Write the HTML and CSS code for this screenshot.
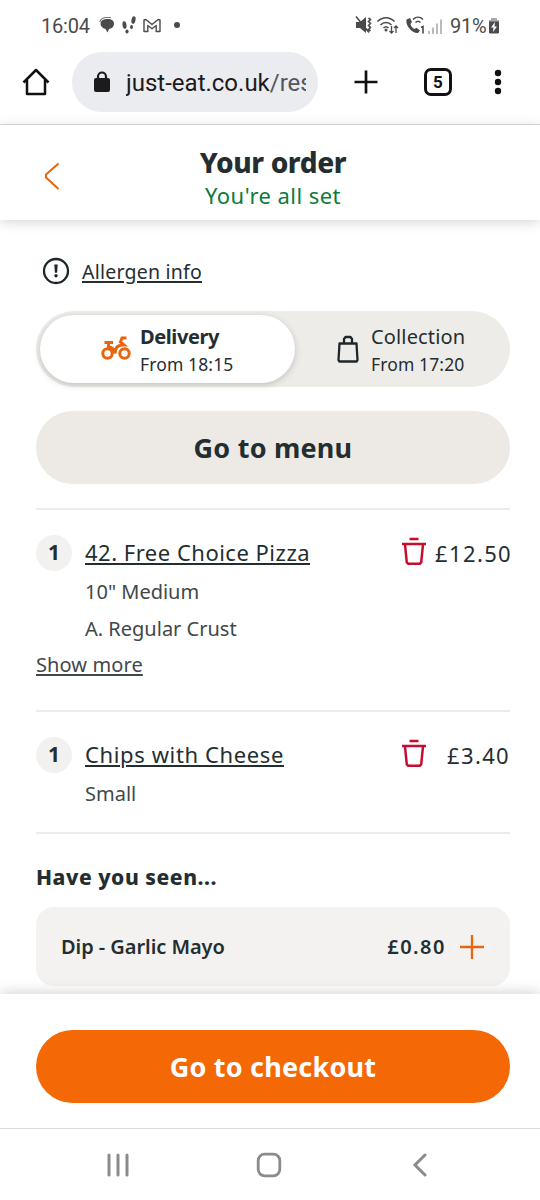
FILE: index.html
```html
<!DOCTYPE html>
<html lang="en">
<head>
<meta charset="utf-8">
<title>Your order</title>
<link rel="stylesheet" href="styles.css">
</head>
<body>
<div class="status-bar">
  <span class="clock">16:04</span>
  <svg class="status-left" width="90" height="24" viewBox="0 0 90 24">
    <g fill="#4b4b4b">
      <path d="M1.500 9.500C2 6 5 5 8.500 5c4.500 0 6.500 2 6.500 4.800S12.500 15 10 15L8.500 18.500 6.500 15C3.500 14 1.500 12.500 1.500 9.500Z"/>
      <ellipse cx="25.500" cy="11" rx="2" ry="3.800" transform="rotate(-8 25.500 11)"/>
      <ellipse cx="28" cy="17.500" rx="1.600" ry="1.900"/>
      <ellipse cx="34.500" cy="6" rx="2" ry="3.800" transform="rotate(12 34.500 6)"/>
      <ellipse cx="32.500" cy="13" rx="1.500" ry="2"/>
      <circle cx="78" cy="11" r="3"/>
    </g>
    <path d="M.8 8C1.500 5 4 3.500 8 3.500h4" fill="none" stroke="#777" stroke-width="1.200"/>
    <path d="M45 6v11.500h3.800v-6l4.200 3.200 4.200-3.200v6H61V6l-1.800-.5L53 10.500l-6.200-5Z" fill="none" stroke="#4b4b4b" stroke-width="1.400" stroke-linejoin="round"/>
  </svg>
  <svg class="status-right" width="90" height="24" viewBox="0 0 90 24">
    <g fill="#4b4b4b">
      <path d="M1 8h4l6-5v16l-6-5H1Z"/>
      <circle cx="31" cy="16" r="1.500"/>
      <path d="M51.500 5.500 55 4l2 4-1.500 2c.5 2.500 2 4 4 5l2-1.200 3.500 2.700-2 2.500C57 19.500 50 11 51.500 5.500Z"/>
    </g>
    <g fill="none" stroke="#4b4b4b" stroke-width="1.600">
      <path d="M1 2.500 14 18.500M13.500 4l2 1.500-2 2 2 2-2 2 2 2-2 2 2 1.500"/>
      <path d="M22.500 7.500c5-5 12-5 17 0M25.500 11c3-3.300 8-3.300 11 0M28.500 14c1.500-1.500 3.500-1.500 5 0"/>
      <path d="M36.500 12v7m-2-2 2 2 2-2M41 19v-7m-2 2 2-2 2 2" stroke-width="1.300"/>
      <path d="M58 5.500c3-3 7-3 10 0M60.500 8.500c1.500-1.500 3.500-1.500 5 0M66 13.500l2-1v7"/>
    </g>
    <path d="M73 17h2v3h-2zM77 13.500h2V20h-2zM81 9.500h2V20h-2zM85 5.500h2V20h-2z" fill="#bbb"/>
  </svg>
  <span class="battery-level">91%</span>
  <svg class="battery" width="12" height="18" viewBox="0 0 12 18">
    <path d="M3 1h6v2h2v4H1V3h2Z" fill="#aaa"/>
    <path d="M1 4.500h10v11l-1 1H2l-1-1Z" fill="#4b4b4b"/>
    <path d="M7 5 3 10.500h2.500L5 15l4-5.500H6.500Z" fill="#fff"/>
  </svg>
</div>

<div class="browser-bar">
  <svg class="home" width="28" height="28" viewBox="0 0 28 28" fill="none" stroke="#111" stroke-width="2.500" stroke-linejoin="round">
    <path d="M1.500 14.500 14 2l12.500 12.500M5 12v14h18V12"/>
  </svg>
  <div class="address">
    <svg width="18" height="24" viewBox="0 0 18 24"><path d="M5 9V6.500a4 4 0 0 1 8 0V9" fill="none" stroke="#1b1b1d" stroke-width="2.200"/><rect x="1" y="8" width="16" height="14" rx="2" fill="#1b1b1d"/></svg>
    <span class="url">just-eat.co.uk<span class="url-path">/res</span></span>
  </div>
  <svg class="new-tab" width="26" height="26" viewBox="0 0 26 26"><path d="M13 1.500v23M1.500 13h23" stroke="#111" stroke-width="2.700"/></svg>
  <div class="tab-count">5</div>
  <svg class="kebab" width="8" height="26" viewBox="0 0 8 26" fill="#111"><circle cx="4" cy="4" r="3.200"/><circle cx="4" cy="13" r="3.200"/><circle cx="4" cy="22" r="3.200"/></svg>
</div>

<header class="order-header">
  <svg class="back" width="18" height="30" viewBox="0 0 18 30"><path d="M16.500 2.500 4 13.600v2.800L16.500 28" fill="none" stroke="#e8650d" stroke-width="2" stroke-linejoin="round"/></svg>
  <h1 class="title">Your order</h1>
  <p class="subtitle">You're all set</p>
</header>

<main class="content">
  <div class="allergen">
    <svg width="28" height="28" viewBox="0 0 28 28"><circle cx="14" cy="14" r="12" fill="none" stroke="#1d272b" stroke-width="2.300"/><path d="M12.300 7.500h3.400l-.6 8.200h-2.200Z" fill="#1d272b"/><circle cx="14" cy="18.800" r="1.700" fill="#1d272b"/></svg>
    <a class="link">Allergen info</a>
  </div>

  <div class="switch">
    <div class="option selected">
      <svg class="bike" width="30" height="26" viewBox="0 0 30 26" fill="none" stroke="#e8650d" stroke-width="3">
        <circle cx="6.500" cy="18.500" r="4.700"/><circle cx="23.500" cy="18.500" r="4.700"/>
        <path d="M3.500 7.500h8.500M7.500 7.500v4.500c4 .5 6 3 6.500 6.500 0-6 3-8.500 7.500-8.500h1.500L19.500 7l1.500-4h4.500"/>
      </svg>
      <div class="option-text"><div class="option-name">Delivery</div><div class="option-time">From 18:15</div></div>
    </div>
    <div class="option">
      <svg class="bag" width="22" height="28" viewBox="0 0 22 28" fill="none" stroke="#1d272b" stroke-width="2.300" stroke-linejoin="round">
        <path d="M2.500 8.500h17l1 16.500-1 1.500h-17l-1-1.500ZM7 8.500V4l1.500-2h5L15 4v4.500"/>
      </svg>
      <div class="option-text"><div class="option-name">Collection</div><div class="option-time">From 17:20</div></div>
    </div>
  </div>

  <button class="button menu-button">Go to menu</button>

  <section class="item pizza">
    <div class="qty">1</div>
    <div class="item-name"><a class="link">42. Free Choice Pizza</a></div>
    <svg class="trash" width="26" height="28" viewBox="0 0 26 28" fill="none" stroke="#c60d2f" stroke-width="2.500"><path d="M8.500 2h9M1 7h24M4 7.500l1.800 18 1.500 1.300h11.400l1.500-1.300L22 7.500"/></svg>
    <div class="price">£12.50</div>
    <div class="option-line">10" Medium</div>
    <div class="option-line">A. Regular Crust</div>
    <div class="more"><a class="link">Show more</a></div>
  </section>

  <section class="item chips">
    <div class="qty">1</div>
    <div class="item-name"><a class="link">Chips with Cheese</a></div>
    <svg class="trash" width="26" height="28" viewBox="0 0 26 28" fill="none" stroke="#c60d2f" stroke-width="2.500"><path d="M8.500 2h9M1 7h24M4 7.500l1.800 18 1.500 1.300h11.400l1.500-1.300L22 7.500"/></svg>
    <div class="price">£3.40</div>
    <div class="option-line">Small</div>
  </section>

  <section class="suggestions">
    <h2>Have you seen...</h2>
    <div class="suggestion">
      <span>Dip - Garlic Mayo</span>
      <span class="suggestion-price">£0.80</span>
      <svg width="26" height="26" viewBox="0 0 26 26"><path d="M13 1v24M1 13h24" stroke="#e8650d" stroke-width="2.300"/></svg>
    </div>
  </section>
</main>

<footer class="checkout-bar">
  <button class="button checkout">Go to checkout</button>
</footer>

<nav class="system-nav">
  <svg width="24" height="24" viewBox="0 0 24 24" stroke="#8b8b8b" stroke-width="3" stroke-linecap="round"><path d="M3 2v20M12 2v20M21 2v20"/></svg>
  <svg width="26" height="26" viewBox="0 0 26 26" fill="none" stroke="#8b8b8b" stroke-width="2.800"><rect x="2.200" y="2.200" width="21.600" height="21.600" rx="6.500"/></svg>
  <svg width="16" height="24" viewBox="0 0 16 24" fill="none" stroke="#8b8b8b" stroke-width="3" stroke-linecap="round"><path d="M13 2 3 12l10 10"/></svg>
</nav>
</body>
</html>
```

FILE: styles.css
```css
* { box-sizing: border-box; }
body { margin: 0; width: 540px; height: 1200px; overflow: hidden; background: #fff; color: #242e30; font-family: "Noto Sans", sans-serif; display: flex; flex-direction: column; white-space: nowrap; }
svg { display: block; flex: none; }
h1, h2, p { margin: 0; }
.link { text-decoration: underline; text-decoration-thickness: 2px; text-underline-offset: 2px; }

/* Phone status bar */
.status-bar { height: 52px; display: flex; align-items: center; padding-left: 41px; font-family: Roboto, sans-serif; font-size: 20px; color: #4b4b4b; }
.clock { width: 58px; letter-spacing: -.2px; }
.status-right { margin-left: 166px; }
.battery-level { width: 38px; margin-left: 5px; letter-spacing: -.2px; }

/* Browser toolbar */
.browser-bar { height: 73px; flex: none; display: flex; align-items: flex-start; border-bottom: 1px solid #dcdcdc; padding-left: 22px; font-family: Roboto, sans-serif; }
.home { margin-top: 16px; }
.address { width: 246px; height: 60px; margin-left: 22px; padding: 0 12px 0 21px; border-radius: 30px; background: #ebecf0; display: flex; align-items: center; gap: 15px; }
.url { font-size: 24px; color: #1b1b1d; overflow: hidden; width: 181px; line-height: 36px; padding-top: 1px; }
.url-path { color: #54565a; }
.new-tab { margin: 17px 0 0 35px; }
.tab-count { width: 28px; height: 28px; margin: 16px 0 0 45px; border: 3px solid #111; border-radius: 7px; font-size: 17px; font-weight: 700; line-height: 22px; text-align: center; color: #111; }
.kebab { margin: 17px 0 0 42px; }

/* Order header */
.order-header { position: relative; z-index: 1; height: 95px; flex: none; padding: 17px 0 0 6px; text-align: center; background: #fff; box-shadow: 0 2px 12px rgba(0, 0, 0, .17); }
.back { position: absolute; left: 42px; top: 36px; }
.title { height: 39px; font-size: 28px; font-weight: 800; line-height: 40px; letter-spacing: -.4px; }
.subtitle { height: 30px; font-size: 22px; line-height: 28px; letter-spacing: .45px; color: #0b7a3c; }

.content { height: 774px; flex: none; padding: 34px 30px 0 36px; overflow: hidden; }
.allergen { height: 34px; display: flex; align-items: center; gap: 12px; padding-left: 6px; font-size: 19.500px; letter-spacing: .22px; }

/* Delivery / collection switch */
.switch { height: 76px; margin-top: 23px; display: flex; border-radius: 38px; background: #eeece8; padding: 4px; }
.option { display: flex; width: 211px; padding-left: 42px; }
.option.selected { width: 255px; padding-left: 61px; border-radius: 34px; background: #fff; box-shadow: 0 2px 7px rgba(0, 0, 0, .18); }
.bike { margin-top: 20px; }
.bag { margin-top: 20px; }
.option-text { margin-left: 12px; padding-top: 8px; }
.selected .option-text { margin-left: 9px; }
.option-name { height: 27px; line-height: 27px; font-size: 20px; letter-spacing: .15px; }
.selected .option-name { font-weight: 700; letter-spacing: -.4px; }
.option-time { height: 27px; line-height: 28px; font-size: 17.500px; letter-spacing: .12px; }

.button { display: block; border: 0; width: 474px; height: 73px; border-radius: 37px; padding: 0; font: 700 27px/73px "Noto Sans", sans-serif; letter-spacing: .22px; color: #242e30; background: #ede9e4; }
.menu-button { margin-top: 24px; }

/* Basket items */
.item { display: grid; grid-template-columns: 49px 1fr 26px 83px; border-top: 2px solid #ececec; padding-top: 25px; }
.pizza { margin-top: 24px; height: 202px; grid-template-rows: 40px 37px 36px 37px; }
.chips { height: 122px; grid-template-rows: 40px 37px; }
.qty { width: 36px; height: 36px; border-radius: 50%; background: #f3f1ef; font-size: 21px; font-weight: 700; line-height: 35px; text-align: center; }
.item-name { font-size: 22px; line-height: 34px; letter-spacing: .5px; }
.chips .item-name { letter-spacing: .62px; }
.trash { margin-top: 2px; }
.price { font-size: 22px; line-height: 36px; text-align: right; letter-spacing: 1.350px; margin-right: -2px; }
.chips .price { margin-right: 0; }
.option-line { grid-column: 2 / -1; font-size: 20px; line-height: 33px; color: #3f484b; }
.more { grid-column: 1 / -1; font-size: 20px; line-height: 33px; letter-spacing: .1px; color: #3f484b; }

.suggestions { border-top: 2px solid #ececec; }
.suggestions h2 { font-size: 21px; font-weight: 800; line-height: 30px; letter-spacing: .55px; padding-top: 28px; height: 73px; }
.suggestion { height: 79px; border-radius: 18px; background: #f4f2f0; display: flex; align-items: center; padding: 0 25px; font-size: 20px; font-weight: 600; letter-spacing: -.05px; }
.suggestion-price { margin: 0 13px 0 auto; letter-spacing: 1.500px; }

/* Sticky checkout bar */
.checkout-bar { position: relative; height: 135px; flex: none; padding: 36px 36px 0; background: #fff; border-bottom: 1px solid #dcdcdc; box-shadow: 0 -2px 12px rgba(0, 0, 0, .17); }
.checkout { background: #f46905; color: #fff; }

.system-nav { height: 71px; display: flex; align-items: center; padding-left: 106px; background: #fff; position: relative; }
.system-nav svg:nth-child(2) { margin-left: 126px; }
.system-nav svg:nth-child(3) { margin-left: 130px; }
```
